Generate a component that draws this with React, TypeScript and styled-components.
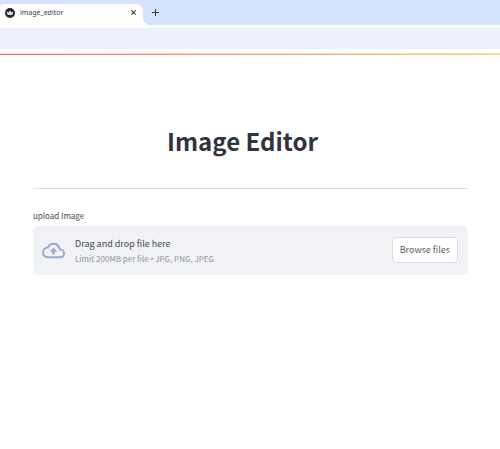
import React, { useId, useRef } from "react";
import styled, { createGlobalStyle } from "styled-components";

const GlobalStyle = createGlobalStyle`
  *, *::before, *::after { box-sizing: border-box; }
  body {
    margin: 0;
    background: #ffffff;
    color: #31333f;
    font-family: "Noto Sans CJK SC", "Noto Sans", sans-serif;
  }
  button { font-family: inherit; }
`;

const TabStrip = styled.header`
  display: flex;
  height: 25px;
  padding-top: 4px;
  background: #d3e2fd;
`;

const Tab = styled.div`
  position: relative;
  display: flex;
  align-items: center;
  width: 143px;
  padding: 0 5px 4px;
  background: #ffffff;
  border-radius: 4px 7px 0 0;

  &::after {
    content: "";
    position: absolute;
    left: 100%;
    bottom: 0;
    width: 7px;
    height: 7px;
    background: radial-gradient(circle at 100% 0, transparent 7px, #ffffff 7px);
  }
`;

const TabTitle = styled.span`
  flex: 1;
  margin-left: 5px;
  color: #3c3e44;
  font: 7px/12px "Noto Sans", sans-serif;
`;

const IconButton = styled.button`
  display: flex;
  align-items: center;
  justify-content: center;
  width: 10px;
  height: 17px;
  padding: 0;
  border: 0;
  background: transparent;
  color: #36383e;
`;

const NewTabButton = styled(IconButton)`
  margin-left: 7px;
`;

const Toolbar = styled.div`
  height: 28px;
  background: #ebf0fa;
  border: solid #ffffff;
  border-width: 3px 0 4px;
`;

const Decoration = styled.div`
  height: 2px;
  background: linear-gradient(90deg, #ff6c58, #fdd267);
  border-top: 1px solid #f3dcd3;
`;

const Page = styled.main`
  padding: 66px 32px 0 33px;
`;

const Title = styled.h1`
  margin: 0;
  padding: 3px 16px 14px 0;
  text-align: center;
  font-size: 24px;
  font-weight: 700;
  line-height: 34px;
`;

const Divider = styled.hr`
  height: 1px;
  margin: 16px 0 20px;
  border: 0;
  background: #dfe0e3;
`;

const FieldLabel = styled.label`
  display: block;
  margin-bottom: 3px;
  color: #484a55;
  font-size: 8px;
  line-height: 14px;
`;

const Dropzone = styled.section`
  display: flex;
  align-items: center;
  height: 49px;
  padding: 0 10px 1px 9px;
  background: #f0f2f6;
  border-radius: 5px;
`;

const Instructions = styled.div`
  flex: 1;
  margin-left: 10px;
  padding-top: 2px;
`;

const Prompt = styled.div`
  color: #484a55;
  font-size: 9px;
  line-height: 15px;
`;

const Limits = styled.div`
  color: #92949b;
  font-size: 8px;
  line-height: 15px;
`;

const Bullet = styled.span`
  font-family: "Noto Sans", sans-serif;
  line-height: 1;
`;

const BrowseButton = styled.button`
  height: 26px;
  padding: 0 7px;
  border: 1px solid #d9dbe0;
  border-radius: 5px;
  background: #ffffff;
  color: #5a5c66;
  font-size: 9px;
  line-height: 16px;
`;

const FileInput = styled.input`
  position: absolute;
  width: 1px;
  height: 1px;
  opacity: 0;
  pointer-events: none;
`;

function CrownFavicon() {
  return (
    <svg width="10" height="10" viewBox="0 0 20 20" aria-hidden="true">
      <circle cx="10" cy="10" r="10" fill="#262730" />
      <path
        d="M3.5 7.5 7 9l3-3.5L13 9l3.5-1.5L14.5 14h-9z"
        fill="#ffffff"
      />
      <path d="M5.5 12.2q4.5-1.5 9 0" stroke="#777983" fill="none" />
    </svg>
  );
}

function CloudUpload() {
  return (
    <svg width="23" height="23" viewBox="0 0 24 24" fill="#9ba9cb" aria-hidden="true">
      <path d="M19.35 10.04A7.49 7.49 0 0 0 12 4C9.11 4 6.6 5.64 5.35 8.04A5.994 5.994 0 0 0 0 14c0 3.31 2.69 6 6 6h13c2.76 0 5-2.24 5-5 0-2.64-2.05-4.78-4.65-4.96zM19 18H6c-2.21 0-4-1.79-4-4 0-2.05 1.53-3.76 3.56-3.97l1.07-.11.5-.95A5.469 5.469 0 0 1 12 6c2.62 0 4.88 1.86 5.39 4.43l.3 1.5 1.53.11A2.98 2.98 0 0 1 22 15c0 1.65-1.35 3-3 3zM8 13h2.55v3h2.9v-3H16l-4-4-4 4z" />
    </svg>
  );
}

export default function App() {
  const inputId = useId();
  const fileInput = useRef<HTMLInputElement>(null);

  return (
    <>
      <GlobalStyle />
      <TabStrip>
        <Tab>
          <CrownFavicon />
          <TabTitle>image_editor</TabTitle>
          <IconButton type="button" aria-label="Close tab">
            <svg width="5" height="5" viewBox="0 0 5 5" stroke="currentColor" strokeWidth="1.1">
              <path d="M.4.4l4.2 4.2M4.6.4.4 4.6" />
            </svg>
          </IconButton>
        </Tab>
        <NewTabButton type="button" aria-label="New tab">
          <svg width="7" height="7" viewBox="0 0 7 7" stroke="currentColor">
            <path d="M3.5 0v7M0 3.5h7" />
          </svg>
        </NewTabButton>
      </TabStrip>
      <Toolbar />
      <Decoration />
      <Page>
        <Title>Image Editor</Title>
        <Divider />
        <FieldLabel htmlFor={inputId}>upload Image</FieldLabel>
        <Dropzone>
          <CloudUpload />
          <Instructions>
            <Prompt>Drag and drop file here</Prompt>
            <Limits>
              Limit 200MB per file <Bullet>•</Bullet> JPG, PNG, JPEG
            </Limits>
          </Instructions>
          <FileInput ref={fileInput} id={inputId} type="file" accept=".jpg,.jpeg,.png" tabIndex={-1} />
          <BrowseButton type="button" onClick={() => fileInput.current?.click()}>
            Browse files
          </BrowseButton>
        </Dropzone>
      </Page>
    </>
  );
}
